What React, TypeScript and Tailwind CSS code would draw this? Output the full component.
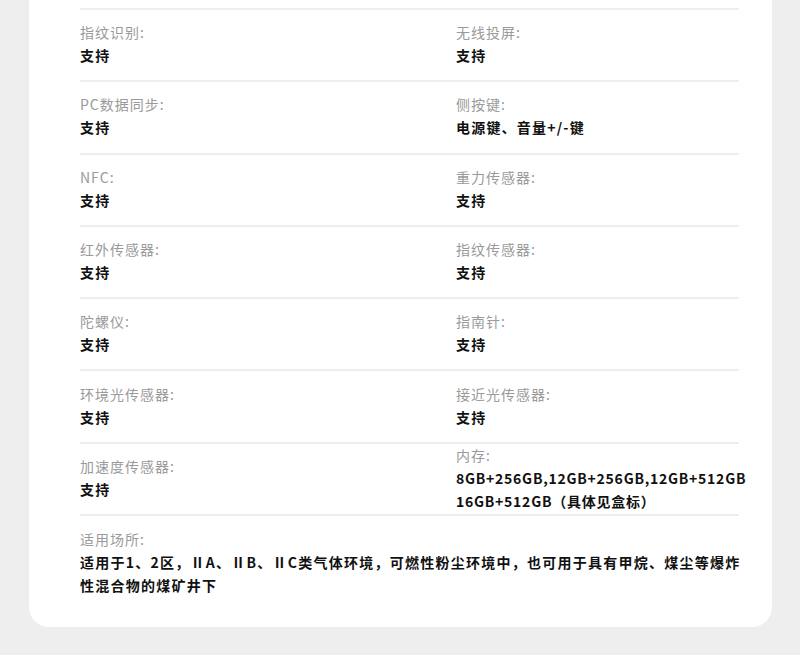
type Spec = { label: string; value: React.ReactNode; tight?: boolean };

const rows: [Spec, Spec][] = [
  [
    { label: '指纹识别:', value: '支持' },
    { label: '无线投屏:', value: '支持' },
  ],
  [
    { label: 'PC数据同步:', value: '支持' },
    { label: '侧按键:', value: '电源键、音量+/-键' },
  ],
  [
    { label: 'NFC:', value: '支持' },
    { label: '重力传感器:', value: '支持' },
  ],
  [
    { label: '红外传感器:', value: '支持' },
    { label: '指纹传感器:', value: '支持' },
  ],
  [
    { label: '陀螺仪:', value: '支持' },
    { label: '指南针:', value: '支持' },
  ],
  [
    { label: '环境光传感器:', value: '支持' },
    { label: '接近光传感器:', value: '支持' },
  ],
  [
    { label: '加速度传感器:', value: '支持' },
    {
      label: '内存:',
      tight: true,
      value: (
        <>
          8GB+256GB,12GB+256GB,12GB+512GB
          <br />
          16GB+512GB（具体见盒标）
        </>
      ),
    },
  ],
];

function Cell({ spec }: { spec: Spec }) {
  return (
    <div className="flex flex-col">
      <span className="text-[14px] leading-[23px] tracking-[1px] text-[#9a9a9a]">
        {spec.label}
      </span>
      <span
        className={`whitespace-nowrap text-[14px] font-bold leading-[23px] text-[#111] ${
          spec.tight ? 'tracking-[0.75px]' : 'tracking-[1.2px]'
        }`}
      >
        {spec.value}
      </span>
    </div>
  );
}

export default function App() {
  return (
    <div
      className="h-[655px] w-[800px] overflow-hidden bg-[#eeeeee] pl-[29px] pr-[28px]"
      style={{ fontFamily: '"Noto Sans CJK SC", "Noto Sans", sans-serif' }}
    >
      <div className="rounded-b-[20px] bg-white pb-[30px] pl-[51px] pr-[33px] pt-[8px]">
        {rows.map(([left, right], i) => (
          <div
            key={i}
            className="grid h-[72.3px] grid-cols-[376px_1fr] items-center border-t-2 border-[#eeeeee] pb-[2px]"
          >
            <Cell spec={left} />
            <Cell spec={right} />
          </div>
        ))}
        <div className="flex flex-col border-t-2 border-[#eeeeee] pt-[12px]">
          <span className="text-[14px] leading-[23px] tracking-[1px] text-[#9a9a9a]">
            适用场所:
          </span>
          <p className="whitespace-nowrap text-[14px] font-bold leading-[23px] tracking-[1.25px] text-[#111]">
            适用于1、2区，ⅡA、ⅡB、ⅡC类气体环境，可燃性粉尘环境中，也可用于具有甲烷、煤尘等爆炸
            <br />
            性混合物的煤矿井下
          </p>
        </div>
      </div>
    </div>
  );
}
